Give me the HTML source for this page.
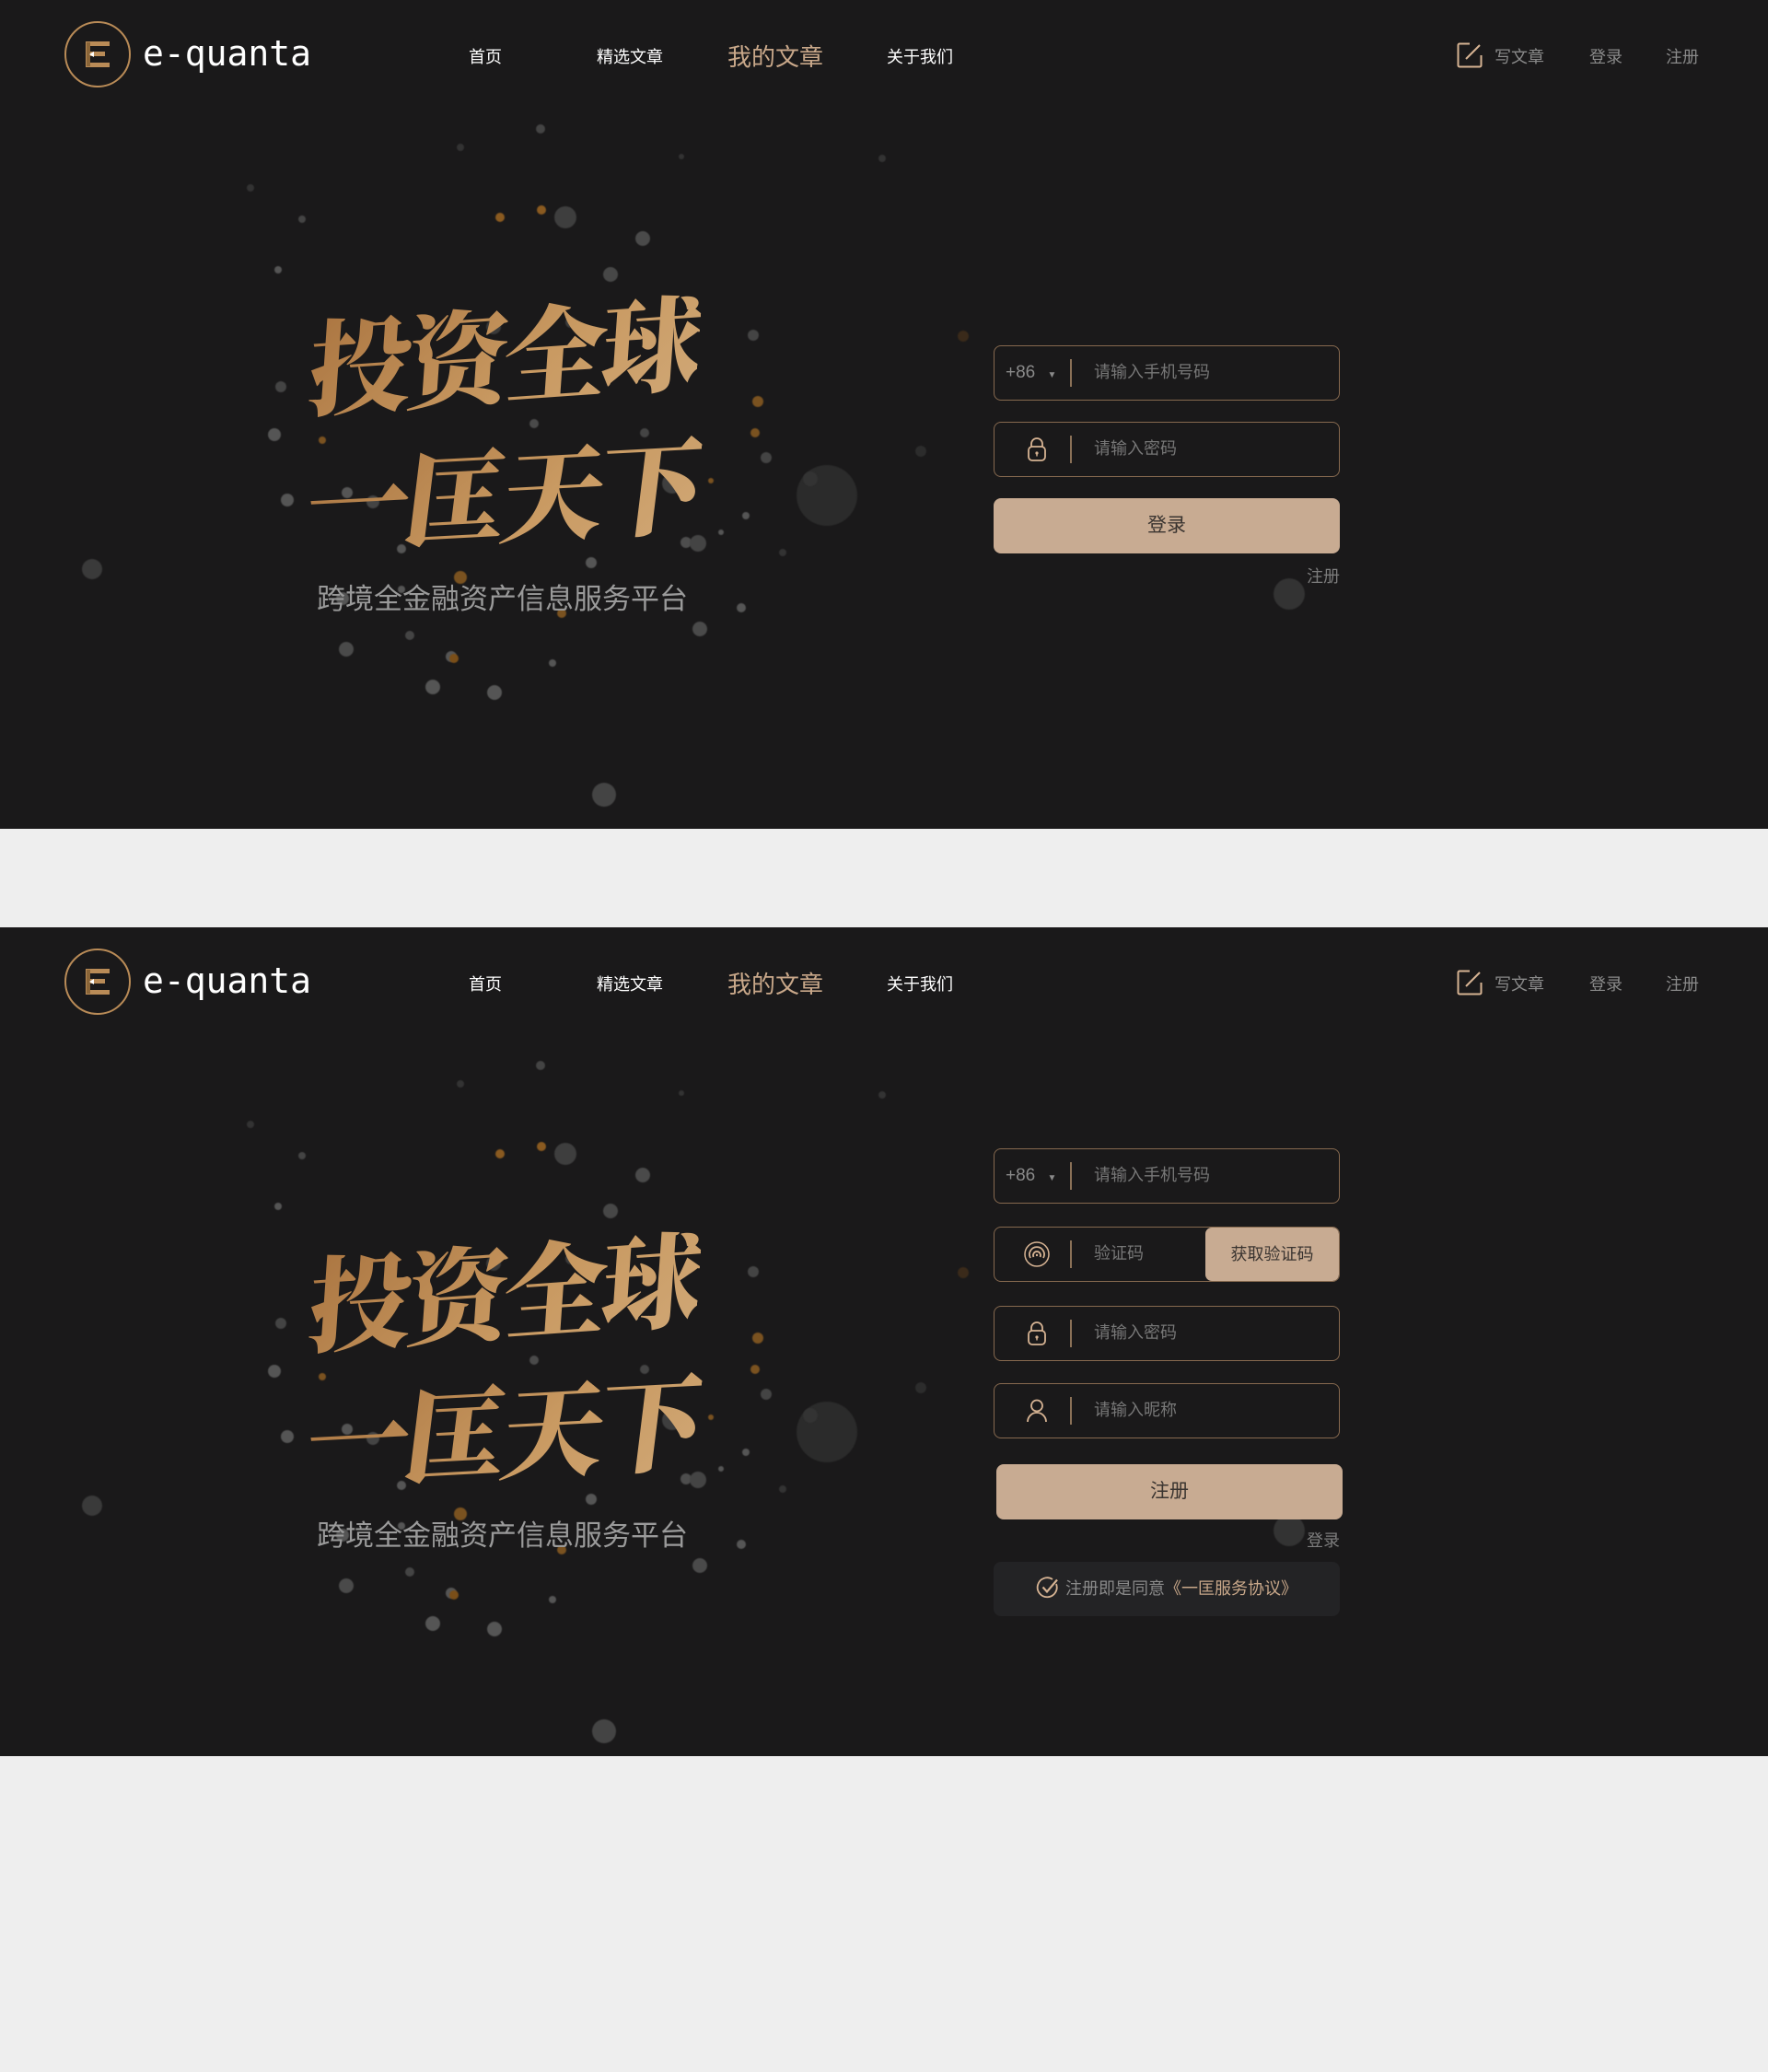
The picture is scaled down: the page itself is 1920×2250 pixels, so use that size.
<!DOCTYPE html>
<html><head><meta charset="utf-8"><style>
*{margin:0;padding:0;box-sizing:border-box}
body{width:1920px;height:2250px;background:#eeeeee;position:relative;overflow:hidden;font-family:"Liberation Sans","Noto Sans CJK SC",sans-serif}
.panel{position:absolute;left:0;width:1920px;height:900px;background:#1a191a;overflow:hidden}
.abs{position:absolute}
.logo{left:70px;top:23px;width:72px;height:72px;border:2px solid #b98b57;border-radius:50%}
.brand{left:155px;top:36px;font-family:"DejaVu Sans Mono",monospace;font-size:38px;color:#fff;letter-spacing:0px;font-weight:normal}
.nav{top:47px;font-size:18px;color:#fff;transform:translateX(-50%);white-space:nowrap}
.nav.act{font-size:26px;color:#c9a88a;top:41px}
.rt{top:48px;font-size:18px;color:#8a8a8a;transform:translateX(-50%);white-space:nowrap}
.cal{font-family:"Noto Serif CJK SC",serif;font-weight:900;white-space:nowrap;letter-spacing:-6px;
background:linear-gradient(135deg,#a8723e,#c99a62 60%,#d0a877);-webkit-background-clip:text;background-clip:text;color:transparent}
.sub{font-size:31px;color:#9a9a9a;white-space:nowrap;letter-spacing:0px}
.inp{left:1079px;width:376px;height:60px;border:1.5px solid #86694f;border-radius:8px}
.ph{position:absolute;left:108px;top:0;line-height:57px;font-size:18px;color:#777}
.sep{position:absolute;left:82px;top:14px;width:2px;height:30px;background:#8a7157}
.ico{position:absolute;left:30px;top:14px;width:32px;height:30px}
.btn{background:#c8ab92;border-radius:8px;text-align:center;line-height:60px;font-size:21px;color:#3a3430;width:376px;height:60px}
.small{font-size:18px;color:#7d7d7d}
.dot{position:absolute;border-radius:50%;filter:blur(0.6px)}
</style></head><body>

<div class="panel" style="top:0"></div>
<div class="panel" style="top:1007px"></div>

<script>
function dots(off){
var d=[[898,538,33,'#2b2b2b'],[100,618,11,'#3a3a3a'],[656,863,13,'#444'],[587,140,5,'#444'],[958,172,4,'#333'],[272,204,4,'#333'],[328,238,4,'#444'],[614,236,12,'#3e3e3e'],[698,259,8,'#4a4a4a'],[543,236,5,'#8a5a20'],[588,228,5,'#8a5a20'],[663,298,8,'#474747'],[536,355,8,'#3a3a3a'],[620,350,6,'#3c3c3c'],[818,364,6,'#444'],[823,436,6,'#7a5220'],[305,420,6,'#444'],[298,472,7,'#555'],[832,497,6,'#444'],[730,525,11,'#3e3e3e'],[810,560,4,'#555'],[377,535,6,'#555'],[312,543,7,'#555'],[372,650,7,'#555'],[436,640,4,'#555'],[376,705,8,'#4a4a4a'],[490,713,6,'#555'],[537,752,8,'#555'],[760,683,8,'#4a4a4a'],[642,611,6,'#555'],[745,589,6,'#4d4d4d'],[783,578,3,'#555'],[610,666,5,'#7a5220'],[493,715,5,'#7a4e18'],[445,690,5,'#444'],[470,746,8,'#555'],[600,720,4,'#555'],[500,627,7,'#7a5220'],[805,660,5,'#555'],[436,596,5,'#555'],[880,520,8,'#333'],[1000,490,6,'#2c2c2c'],[1046,365,6,'#3a2a1a'],[1400,645,17,'#333'],[302,293,4,'#555'],[405,545,7,'#444'],[758,590,9,'#444'],[772,522,3,'#7a5220'],[850,600,4,'#333'],[500,160,4,'#333'],[740,170,3,'#333'],[580,460,5,'#4a4a4a'],[700,470,5,'#444'],[350,478,4,'#7a5220'],[820,470,5,'#7a5220']];
var h='';d.forEach(function(p){h+='<div class="dot" style="left:'+(p[0]-p[2])+'px;top:'+(p[1]-p[2]+off)+'px;width:'+(2*p[2])+'px;height:'+(2*p[2])+'px;background:'+p[3]+'"></div>'});return h;}
function header(off){
return '<div class="abs logo" style="top:'+(23+off)+'px"><svg width="68" height="68" viewBox="0 0 68 68" style="position:absolute;left:0;top:0"><path d="M21 20h26v5H26v6h16v5H26v7h21v5H21z" fill="#b98b57"/><rect x="22" y="21" width="4" height="26" fill="#8a6538"/><path d="M30 31l-5 3 5 3z" fill="#fff"/><rect x="30" y="32.5" width="12" height="3" fill="#b98b57"/></svg></div>'+
'<div class="abs brand" style="top:'+(36+off)+'px">e-quanta</div>'+
'<div class="abs nav" style="left:527px;top:'+(48+off)+'px">首页</div>'+
'<div class="abs nav" style="left:684px;top:'+(48+off)+'px">精选文章</div>'+
'<div class="abs nav act" style="left:842px;top:'+(42+off)+'px">我的文章</div>'+
'<div class="abs nav" style="left:999px;top:'+(48+off)+'px">关于我们</div>'+
'<svg class="abs" style="left:1582px;top:'+(46+off)+'px" width="28" height="28" viewBox="0 0 28 28"><path d="M14 1.5H3a1.5 1.5 0 0 0-1.5 1.5v22A1.5 1.5 0 0 0 3 26.5h22a1.5 1.5 0 0 0 1.5-1.5V14" fill="none" stroke="#d6b393" stroke-width="2"/><path d="M10 18L25 3" stroke="#d6b393" stroke-width="2"/></svg>'+
'<div class="abs rt" style="left:1650px;top:'+(48+off)+'px">写文章</div>'+
'<div class="abs rt" style="left:1744px;top:'+(48+off)+'px">登录</div>'+
'<div class="abs rt" style="left:1827px;top:'+(48+off)+'px">注册</div>';
}
function hero(off){
return dots(off)+
'<div class="abs cal" style="left:336px;top:'+(300+off)+'px;font-size:112px;transform:rotate(-4deg) skewX(-8deg)">投资全球</div>'+
'<div class="abs cal" style="left:334px;top:'+(452+off)+'px;font-size:112px;transform:rotate(-3deg) skewX(-10deg)">一匡天下</div>'+
'<div class="abs sub" style="left:344px;top:'+(625+off)+'px">跨境全金融资产信息服务平台</div>';
}
var lock='<svg class="ico" viewBox="0 0 32 30"><rect x="7" y="12" width="18" height="15" rx="4" fill="none" stroke="#d6b393" stroke-width="1.8"/><path d="M10 12V9a6 6 0 0 1 12 0v3" fill="none" stroke="#d6b393" stroke-width="1.8"/><circle cx="16" cy="19" r="1.6" fill="#d6b393"/><rect x="15.3" y="19" width="1.4" height="3.5" fill="#d6b393"/></svg>';
var phone=function(t){return '<div class="abs inp" style="top:'+t+'px"><div style="position:absolute;left:12px;top:0;line-height:57px;font-size:19px;color:#8a8a8a">+86 <span style="font-size:10px;margin-left:8px">▼</span></div><div class="sep"></div><div class="ph">请输入手机号码</div></div>';};
var out='';
out+=header(0)+hero(0);
out+=phone(375);
out+='<div class="abs inp" style="top:458px">'+lock+'<div class="sep"></div><div class="ph">请输入密码</div></div>';
out+='<div class="abs btn" style="left:1079px;top:541px">登录</div>';
out+='<div class="abs small" style="left:1419px;top:612px">注册</div>';
var o=1007;
out+=header(o)+hero(o+10);
out+=phone(1247);
out+='<div class="abs inp" style="top:1332px;overflow:hidden"><svg class="ico" viewBox="0 0 32 30"><circle cx="16" cy="15" r="13" fill="none" stroke="#d6b393" stroke-width="1.5"/><path d="M9 19a8 8 0 1 1 14 0" fill="none" stroke="#d6b393" stroke-width="1.8"/><path d="M12.5 18a4 4 0 1 1 7 0" fill="none" stroke="#d6b393" stroke-width="1.8"/><circle cx="16" cy="16" r="1.2" fill="#d6b393"/></svg><div class="sep"></div><div class="ph">验证码</div><div style="position:absolute;right:0;top:0;width:145px;height:58px;background:#c8ab92;border-radius:7px;line-height:58px;text-align:center;font-size:18px;color:#3a3430">获取验证码</div></div>';
out+='<div class="abs inp" style="top:1418px">'+lock+'<div class="sep"></div><div class="ph">请输入密码</div></div>';
out+='<div class="abs inp" style="top:1502px"><svg class="ico" viewBox="0 0 32 30"><circle cx="16" cy="9.5" r="6" fill="none" stroke="#d6b393" stroke-width="1.8"/><path d="M6 27a10 10 0 0 1 20 0" fill="none" stroke="#d6b393" stroke-width="1.8"/></svg><div class="sep"></div><div class="ph">请输入昵称</div></div>';
out+='<div class="abs btn" style="left:1082px;top:1590px">注册</div>';
out+='<div class="abs small" style="left:1419px;top:1659px">登录</div>';
out+='<div class="abs" style="left:1079px;top:1696px;width:376px;height:59px;background:#232325;border-radius:8px;text-align:center;line-height:59px;font-size:18px;color:#8a8a8a"><svg width="26" height="26" viewBox="0 0 26 26" style="vertical-align:middle;margin-right:6px;margin-top:-4px"><path d="M22 9a10.5 10.5 0 1 1-4-5" fill="none" stroke="#d6b393" stroke-width="1.8"/><path d="M7.5 12.5l4.5 5 11-13" fill="none" stroke="#d6b393" stroke-width="2.2"/></svg>注册即是同意<span style="color:#c9a88a">《一匡服务协议》</span></div>';
document.write(out);
</script>
</body></html>
